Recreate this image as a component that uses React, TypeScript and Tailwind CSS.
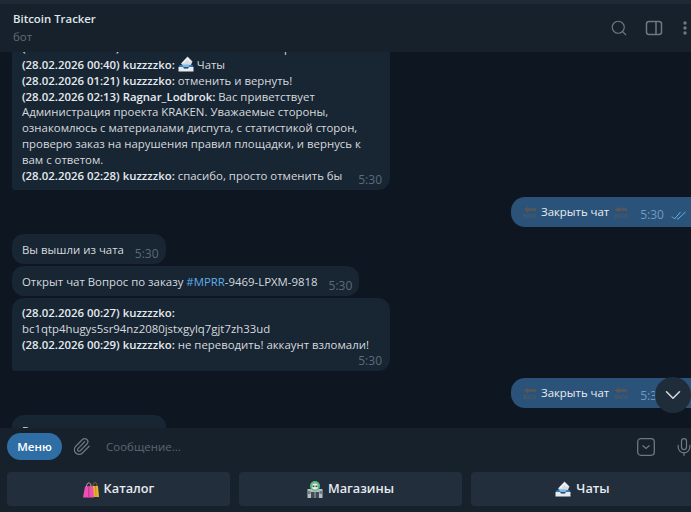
import React from 'react';
import { Search, Paperclip, Mic, ChevronDown } from 'lucide-react';

const FONT = "font-['Open_Sans','Noto_Sans',sans-serif]";

function MailEmoji({ size = 16 }: { size?: number }) {
  return (
    <svg width={size} height={size} viewBox="0 0 16 16" className="inline-block align-[-3px]">
      <path d="M3 7.5 L9.5 0.5 L14.5 5.5 L12.5 10 L6 11 Z" fill="#d7dce2" />
      <path d="M5 7 L9.5 2.5 L12.5 5.5" fill="none" stroke="#f4f6f8" strokeWidth="1.2" />
      <path d="M1.5 9 L14.5 9 L15.5 11.5 L0.5 11.5 Z" fill="#2b78bd" />
      <path d="M4 8.5 L12 8.5 L10.5 11 L5.5 11 Z" fill="#7db8e3" />
      <path d="M0.5 11 L5 11 L6 12.5 L10 12.5 L11 11 L15.5 11 L15.5 15.5 L0.5 15.5 Z" fill="#e8ebee" />
    </svg>
  );
}

function BagsEmoji() {
  return (
    <svg width="16" height="17" viewBox="0 0 16 17" className="inline-block">
      <path d="M9 5 L15 5 L16 16 L10 16 Z" fill="#e6b52e" />
      <path d="M12 5 L13 5 L13.5 16 L12.5 16 Z" fill="#c98f22" />
      <path d="M2 5.5 L10 5 L11 16.5 L0 16.5 Z" fill="#ee4fb4" />
      <path d="M5 6 L6.5 6 L6.5 16.5 L5 16.5 Z" fill="#c93c92" />
      <path d="M3.5 6 C3.5 0.5 8 0.5 8 5.5" fill="none" stroke="#b9a38a" strokeWidth="1" />
      <path d="M10 5 C10 0.5 14 0.5 14 5" fill="none" stroke="#8a6a2a" strokeWidth="1" />
    </svg>
  );
}

function StoreEmoji() {
  return (
    <svg width="16" height="17" viewBox="0 0 16 17" className="inline-block">
      <rect x="0.5" y="8" width="15" height="9" fill="#b3bcc0" />
      <rect x="4" y="11" width="8" height="6" fill="#3e4c55" />
      <rect x="7.5" y="11" width="1" height="6" fill="#9aa6ac" />
      <rect x="0.5" y="10" width="3" height="3" fill="#6f7f88" />
      <rect x="12.5" y="10" width="3" height="3" fill="#6f7f88" />
      <circle cx="8" cy="5" r="5" fill="#5fbb7f" />
      <circle cx="8" cy="5.5" r="3" fill="#e8efe9" />
      <rect x="5.5" y="4.5" width="2" height="1.6" fill="#41505a" />
      <rect x="8.5" y="4.5" width="2" height="1.6" fill="#41505a" />
    </svg>
  );
}

function BackEmoji() {
  return (
    <span className="inline-flex flex-col items-center w-[15px] leading-none">
      <svg width="14" height="7" viewBox="0 0 14 8">
        <path d="M0 4 L5 0.5 L5 2.5 L14 2.5 L14 5.5 L5 5.5 L5 7.5 Z" fill="#5b5654" />
      </svg>
      <span className="text-[5px] leading-[6px] font-semibold text-[#4f5a66]">BACK</span>
    </span>
  );
}

function Time({ tone = 'text-[#5c6b78]', className = '' }: { tone?: string; className?: string }) {
  return <span className={`text-[12px] leading-none ${tone} ${className}`}>5:30</span>;
}

function Name({ children }: { children: React.ReactNode }) {
  return <span className="font-semibold text-[#e6ebef]">{children}</span>;
}

function IncomingShort({ children }: { children: React.ReactNode }) {
  return (
    <div className="self-start ml-3 pl-2.5 pr-[7px] h-[30px] rounded-[12px] bg-[#182533] flex items-center gap-[11px] whitespace-nowrap">
      <span className="relative top-px">{children}</span>
      <Time className="relative top-[5px]" />
    </div>
  );
}

function CloseChatBubble({ covered = false }: { covered?: boolean }) {
  return (
    <div className="self-end w-[180px] h-[30px] rounded-l-[14px] bg-[#2b5278] flex items-center pl-[11px] whitespace-nowrap">
      <span className="flex items-center gap-1 text-[#e8eef3]">
        <BackEmoji />
        <span>Закрыть чат</span>
        <BackEmoji />
      </span>
      <Time tone="text-[#6f9cc4]" className="ml-[12px] relative top-[3px]" />
      {!covered && (
        <svg width="16" height="9" viewBox="0 0 16 9" className="ml-[7px] relative top-[3px]" fill="none" stroke="#5fb0f0" strokeWidth="1">
          <path d="M1 5.5 L3.5 8 L9.5 1" />
          <path d="M6 8 L7 8 L14.5 1" />
        </svg>
      )}
    </div>
  );
}

function KeyButton({ children }: { children: React.ReactNode }) {
  return (
    <div className="w-[223px] shrink-0 h-[34px] rounded-[4px] bg-[#232e3c] flex items-center justify-center gap-[5px] text-[12.75px] font-semibold text-[#e6ebef]">
      {children}
    </div>
  );
}

export default function App() {
  return (
    <div className={`${FONT} relative w-[691px] h-[512px] overflow-hidden flex flex-col bg-[#0e1621] text-[11.4px] leading-[15.85px] text-[#d5dade]`}>
      <div className="h-1 bg-[#1f2936]" />

      <header className="h-[48px] shrink-0 z-10 bg-[#17212b] flex items-center justify-between pl-[13px] pr-1">
        <div className="relative -top-px">
          <div className="text-[11.4px] leading-[18px] font-semibold text-[#dfe5ea]">Bitcoin Tracker</div>
          <div className="text-[11.5px] leading-[17px] text-[#5f6d79]">бот</div>
        </div>
        <div className="flex items-center text-[#6c7883]">
          <Search size={18} strokeWidth={1.5} />
          <svg width="18" height="16" viewBox="0 0 18 16" fill="none" stroke="currentColor" strokeWidth="1.5" className="ml-[17px]">
            <rect x="1.5" y="1.5" width="15" height="13" rx="2.5" />
            <path d="M11 1.5 V14.5" />
          </svg>
          <svg width="4" height="14" viewBox="0 0 4 14" fill="currentColor" className="ml-5">
            <circle cx="2" cy="2" r="1.7" />
            <circle cx="2" cy="7" r="1.7" />
            <circle cx="2" cy="12" r="1.7" />
          </svg>
        </div>
      </header>

      <main className="flex-1 min-h-0 overflow-hidden flex flex-col">
        <div className="self-start ml-3 -mt-[14px] w-[378px] h-[152px] rounded-[12px] rounded-bl-[3px] bg-[#182533] pl-2.5 pr-2 pt-[2px] shrink-0 whitespace-nowrap">
          <div><Name>(28.02.2026 00:38) kuzzzzko:</Name> В течении какого времени ?</div>
          <div><Name>(28.02.2026 00:40) kuzzzzko:</Name> <MailEmoji /> Чаты</div>
          <div><Name>(28.02.2026 01:21) kuzzzzko:</Name> отменить и вернуть!</div>
          <div><Name>(28.02.2026 02:13) Ragnar_Lodbrok:</Name> Вас приветствует</div>
          <div>Администрация проекта KRAKEN. Уважаемые стороны,</div>
          <div>ознакомлюсь с материалами диспута, с статистикой сторон,</div>
          <div>проверю заказ на нарушения правил площадки, и вернусь к</div>
          <div>вам с ответом.</div>
          <div className="flex justify-between items-end">
            <span><Name>(28.02.2026 02:28) kuzzzzko:</Name> спасибо, просто отменить бы</span>
            <Time className="relative top-[2px]" />
          </div>
        </div>

        <div className="mt-[7px] flex flex-col shrink-0"><CloseChatBubble /></div>

        <div className="mt-[7px] flex flex-col gap-[2px] shrink-0">
          <IncomingShort>Вы вышли из чата</IncomingShort>
          <IncomingShort>
            Открыт чат Вопрос по заказу <span className="text-[#5eaee8]">#MPRR</span>-9469-LPXM-9818
          </IncomingShort>
          <div className="self-start ml-3 w-[378px] h-[73px] rounded-[12px] rounded-bl-[3px] bg-[#182533] pl-2.5 pr-2 pt-[7px] whitespace-nowrap">
            <div><Name>(28.02.2026 00:27) kuzzzzko:</Name></div>
            <div>bc1qtp4hugys5sr94nz2080jstxgylq7gjt7zh33ud</div>
            <div><Name>(28.02.2026 00:29) kuzzzzko:</Name> не переводить! аккаунт взломали!</div>
            <div className="text-right"><Time /></div>
          </div>
        </div>

        <div className="mt-[7px] flex flex-col shrink-0"><CloseChatBubble covered /></div>

        <div className="mt-[7px] flex flex-col shrink-0">
          <IncomingShort>Вы вышли из чата</IncomingShort>
        </div>
      </main>

      <footer className="h-[84px] shrink-0 z-10 bg-[#17212b] flex flex-col overflow-hidden">
        <div className="h-[37px] flex items-center pl-[7px] pr-0">
          <div className="w-[55px] h-[27px] rounded-full bg-[#2f6ea5] flex items-center justify-center text-[11.5px] font-semibold text-white">
            Меню
          </div>
          <Paperclip size={19} strokeWidth={1.5} className="ml-[10px] text-[#6c7883]" />
          <span className="ml-[15px] text-[11.5px] text-[#5a6773]">Сообщение...</span>
          <div className="ml-auto flex items-center gap-[19px] -mr-[3px] text-[#6c7883]">
            <svg width="18" height="18" viewBox="0 0 18 18" fill="none" stroke="currentColor" strokeWidth="1.3">
              <rect x="0.7" y="0.7" width="16.6" height="16.6" rx="3.2" />
              <path d="M5.5 7.5 L9 10.5 L12.5 7.5" />
            </svg>
            <Mic size={20} strokeWidth={1.5} />
          </div>
        </div>
        <div className="flex gap-[9px] pl-[7px] mt-[7px]">
          <KeyButton><BagsEmoji />Каталог</KeyButton>
          <KeyButton><StoreEmoji />Магазины</KeyButton>
          <KeyButton><MailEmoji />Чаты</KeyButton>
        </div>
      </footer>

      <div className="absolute z-20 left-[655px] top-[377px] w-9 h-9 rounded-full bg-[#1f2c3a] flex items-center justify-center text-[#cfd6dc]">
        <ChevronDown size={26} strokeWidth={1.5} />
      </div>
    </div>
  );
}
